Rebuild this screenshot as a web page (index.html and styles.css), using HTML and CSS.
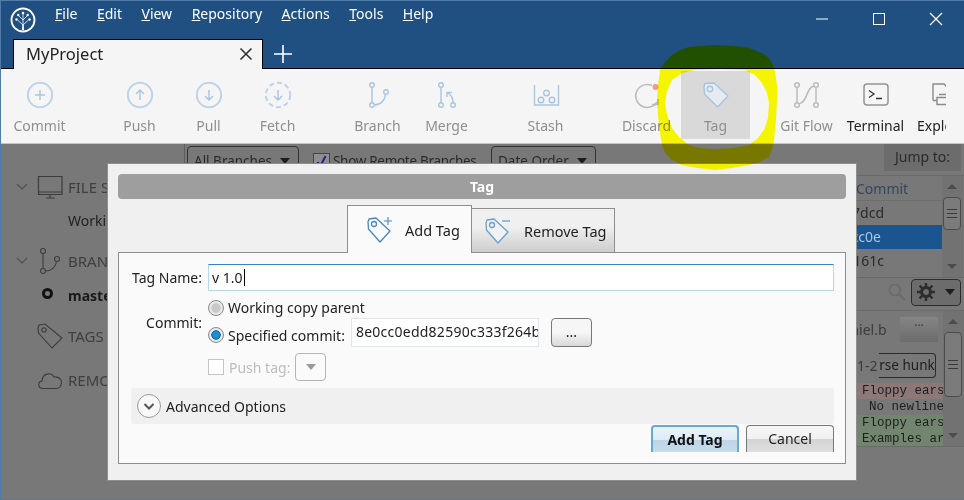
FILE: index.html

```html
<!DOCTYPE html>
<html lang="en">
<head>
  <meta charset="UTF-8">
  <title>MyProject - Tag</title>
  <link rel="stylesheet" href="styles.css">
</head>
<body>
  <div class="window">

    <!-- title bar, menu and tabs -->
    <div class="titlebar">
      <div class="menu-row">
        <svg class="logo" width="26" height="26" viewBox="0 0 26 26">
          <circle cx="13" cy="13" r="11.5" fill="none" stroke="#fff" stroke-width="1.8"/>
          <path d="M13 22.500V6.500M13 18L7.500 13M13 18L18.500 13M13 13L8.500 8.500M13 13L17.500 8.500" fill="none" stroke="#dfe8f0" stroke-width="0.900"/>
          <path d="M12 23L12.500 17H13.500L14 23Z" fill="#fff"/>
          <circle cx="13" cy="6" r="1.300" fill="#fff"/>
          <circle cx="8.300" cy="8" r="1.200" fill="#fff"/>
          <circle cx="17.700" cy="8" r="1.200" fill="#fff"/>
          <circle cx="6.500" cy="12.500" r="1.200" fill="#fff"/>
          <circle cx="19.500" cy="12.500" r="1.200" fill="#fff"/>
        </svg>
        <div class="menu">
          <span><u>F</u>ile</span>
          <span><u>E</u>dit</span>
          <span><u>V</u>iew</span>
          <span><u>R</u>epository</span>
          <span><u>A</u>ctions</span>
          <span><u>T</u>ools</span>
          <span><u>H</u>elp</span>
        </div>
        <div class="win-controls">
          <div class="win-btn"><svg width="14" height="14" viewBox="0 0 14 14"><path d="M1 7H13" stroke="#fff" stroke-width="1"/></svg></div>
          <div class="win-btn"><svg width="14" height="14" viewBox="0 0 14 14"><rect x="1.5" y="1.5" width="11" height="11" fill="none" stroke="#fff" stroke-width="1"/></svg></div>
          <div class="win-btn"><svg width="14" height="14" viewBox="0 0 14 14"><path d="M1 1L13 13M13 1L1 13" stroke="#fff" stroke-width="1.2"/></svg></div>
        </div>
      </div>
      <div class="tab-row">
        <div class="repo-tab">
          <span>MyProject</span>
          <svg width="14" height="14" viewBox="0 0 14 14"><path d="M1.5 1.5L12.5 12.5M12.5 1.5L1.5 12.5" stroke="#333" stroke-width="1.6"/></svg>
        </div>
        <svg class="new-tab" width="20" height="20" viewBox="0 0 20 20"><path d="M10 1V19M1 10H19" stroke="#fff" stroke-width="1.6"/></svg>
      </div>
    </div>

    <!-- toolbar -->
    <div class="toolbar">
      <div class="tool">
        <svg width="30" height="30" viewBox="0 0 30 30"><circle cx="15" cy="15" r="12.2" class="ic-ring"/><path d="M15 10V20M10 15H20" class="ic-line"/></svg>
        <span>Commit</span>
      </div>
      <div class="tool gap-31">
        <svg width="30" height="30" viewBox="0 0 30 30"><circle cx="15" cy="15" r="12.2" class="ic-ring"/><path d="M15 20V10M11 14L15 10L19 14" class="ic-line"/></svg>
        <span>Push</span>
      </div>
      <div class="tool">
        <svg width="30" height="30" viewBox="0 0 30 30"><circle cx="15" cy="15" r="12.2" class="ic-ring"/><path d="M15 10V20M11 16L15 20L19 16" class="ic-line"/></svg>
        <span>Pull</span>
      </div>
      <div class="tool">
        <svg width="30" height="30" viewBox="0 0 30 30"><circle cx="15" cy="15" r="12.2" class="ic-ring" stroke-dasharray="5 3"/><path d="M15 10V20M11 16L15 20L19 16" class="ic-line"/></svg>
        <span>Fetch</span>
      </div>
      <div class="tool gap-31">
        <svg width="30" height="30" viewBox="0 0 30 30"><circle cx="9" cy="5" r="2.3" class="ic-line"/><circle cx="9" cy="25" r="2.3" class="ic-line"/><circle cx="23" cy="12" r="2.3" class="ic-line"/><path d="M9 7.500V22.500M11.500 25C18 25 22 20 22.500 14.500" class="ic-line"/></svg>
        <span>Branch</span>
      </div>
      <div class="tool">
        <svg width="30" height="30" viewBox="0 0 30 30"><circle cx="9" cy="5" r="2.3" class="ic-line"/><circle cx="9" cy="25" r="2.3" class="ic-line"/><circle cx="21" cy="25" r="2.3" class="ic-line"/><path d="M9 7.500V22.500M21 22.500C21 18 19 15 16 13M15 17V12.500H20" class="ic-line"/></svg>
        <span>Merge</span>
      </div>
      <div class="tool gap-30">
        <svg width="30" height="30" viewBox="0 0 30 30"><path d="M3.500 5V25H27.500V5" class="ic-line"/><circle cx="10" cy="20" r="2.800" class="ic-line"/><circle cx="15.500" cy="13" r="2.800" class="ic-line"/><circle cx="21" cy="20" r="2.800" class="ic-line"/></svg>
        <span>Stash</span>
      </div>
      <div class="tool gap-32">
        <svg width="30" height="30" viewBox="0 0 30 30"><path d="M20 5.500A11.500 11.500 0 1 0 25 22" class="ic-grey"/><path d="M20 24.500H26V19" class="ic-grey"/><circle cx="23.500" cy="7" r="3" fill="#ee9a9a"/></svg>
        <span>Discard</span>
      </div>
      <div class="tool tool-hover">
        <svg width="30" height="30" viewBox="0 0 30 30"><path d="M3 6.500L4 3.500L13 3L27 16L16.500 27L3.500 14Z" fill="#e6ebf2" stroke="#a9c3df" stroke-width="1.400" stroke-linejoin="round"/><circle cx="9" cy="9" r="2.700" fill="none" stroke="#a9c3df" stroke-width="1.400"/></svg>
        <span>Tag</span>
      </div>
      <div class="tool gap-22">
        <svg width="30" height="30" viewBox="0 0 30 30"><circle cx="5" cy="5" r="2.300" class="ic-grey"/><circle cx="5" cy="25" r="2.300" class="ic-grey"/><circle cx="24" cy="5" r="2.300" class="ic-grey"/><circle cx="24" cy="25" r="2.300" class="ic-grey"/><path d="M5 7.500V22.500M24 7.500V22.500M22 6C14 7 16 22 7 24" class="ic-grey"/></svg>
        <span>Git Flow</span>
      </div>
      <div class="tool tool-on">
        <svg width="30" height="30" viewBox="0 0 30 30"><rect x="3" y="4" width="24" height="21" rx="3" fill="none" stroke="#959595" stroke-width="1.500"/><path d="M8 10.500L13 14L8 17.500M15 18.500H21" fill="none" stroke="#333" stroke-width="1.300"/></svg>
        <span>Terminal</span>
      </div>
      <div class="tool tool-on tool-cut">
        <div class="tool-inner">
          <svg width="30" height="30" viewBox="0 0 30 30"><path d="M3 20.500V4H14L19 9M3 20.500H6.500M7 17.500H24V24.500H7ZM9 14.500H22" fill="none" stroke="#8a8a8a" stroke-width="1.400"/></svg>
          <span>Explorer</span>
        </div>
      </div>
    </div>

    <!-- dimmed repository view behind the dialog -->
    <div class="workspace">
      <div class="filterbar">
        <div class="filters">
          <div class="dim-select select-branches">All Branches <i class="caret"></i></div>
          <label class="dim-check">
            <b class="check-box"><svg width="15" height="15" viewBox="0 0 15 15"><path d="M3.500 8L6.500 12L11.500 2" fill="none" stroke="#24247c" stroke-width="2"/></svg></b>
            Show Remote Branches
          </label>
          <div class="dim-select select-order">Date Order <i class="caret"></i></div>
        </div>
        <div class="jump">Jump to:</div>
      </div>
      <div class="panes">
        <div class="sidebar">
          <div class="side-head">
            <svg class="chev" width="12" height="8" viewBox="0 0 12 8"><path d="M1 1L6 6L11 1" fill="none" stroke="#555" stroke-width="1.500"/></svg>
            <svg width="26" height="24" viewBox="0 0 26 24"><path d="M1.500 1.500H25V19.500H1.500ZM1.500 17H25M9 23H18M13 20V23" fill="none" stroke="#3c3c3c" stroke-width="1.200"/></svg>
            <span>FILE STATUS</span>
          </div>
          <div class="side-item">Working Copy</div>
          <div class="side-head">
            <svg class="chev" width="12" height="8" viewBox="0 0 12 8"><path d="M1 1L6 6L11 1" fill="none" stroke="#555" stroke-width="1.500"/></svg>
            <svg width="26" height="26" viewBox="0 0 26 26"><circle cx="6" cy="3" r="2.500" fill="none" stroke="#3c3c3c" stroke-width="1.100"/><circle cx="6" cy="23" r="2.500" fill="none" stroke="#3c3c3c" stroke-width="1.100"/><circle cx="20" cy="11" r="2.500" fill="none" stroke="#3c3c3c" stroke-width="1.100"/><path d="M6 5.500V20.500M8.500 23C14 23 19 19 19.500 13.500" fill="none" stroke="#3c3c3c" stroke-width="1.100"/></svg>
            <span>BRANCHES</span>
          </div>
          <div class="side-current"><i class="head-dot"></i>master</div>
          <div class="side-head side-nochev side-tags">
            <svg width="26" height="26" viewBox="0 0 26 26"><path d="M1 5L2 2L8 1L25 15L15 25L1.500 10Z" fill="none" stroke="#3c3c3c" stroke-width="1.100"/><circle cx="7" cy="7" r="2.200" fill="none" stroke="#3c3c3c" stroke-width="1.100"/></svg>
            <span>TAGS</span>
          </div>
          <div class="side-head side-nochev side-remotes">
            <svg width="26" height="20" viewBox="0 0 26 20"><path d="M6 18.500C1 18.500 0 12 5 11C5 4 14 1 17 7C22 6 25 10 24.500 13C24 17 22 18.500 19 18.500Z" fill="none" stroke="#3c3c3c" stroke-width="1.100"/></svg>
            <span>REMOTES</span>
          </div>
        </div>
        <div class="center"></div>
        <div class="right-pane">
          <div class="history">
            <div class="history-list">
              <div class="history-head">Commit</div>
              <div class="hash">a27dcd</div>
              <div class="hash hash-sel">8e0cc0e</div>
              <div class="hash">f3161c</div>
            </div>
            <div class="scroll">
              <i class="arrow-up"></i>
              <b class="thumb thumb-short"></b>
              <i class="arrow-down"></i>
            </div>
          </div>
          <div class="search-row">
            <svg width="20" height="20" viewBox="0 0 20 20"><circle cx="8" cy="8" r="5.500" fill="none" stroke="#6a6a6a" stroke-width="1.600"/><path d="M12 12L18 18" stroke="#6a6a6a" stroke-width="2.200"/></svg>
            <div class="gear-btn">
              <svg width="18" height="18" viewBox="0 0 18 18"><circle cx="9" cy="9" r="4.500" fill="none" stroke="#2c2c2c" stroke-width="3"/><path d="M9 0V4M9 14V18M0 9H4M14 9H18M2.600 2.600L5.500 5.500M12.500 12.500L15.400 15.400M15.400 2.600L12.500 5.500M5.500 12.500L2.600 15.400" stroke="#2c2c2c" stroke-width="2.400"/></svg>
              <i class="caret"></i>
            </div>
          </div>
          <div class="diff">
            <div class="diff-body">
              <div class="diff-file"><span>daniel.b</span><b class="more">...</b></div>
              <div class="diff-hunk"><span>1-2</span><b class="hunk-btn">rse hunk</b></div>
              <div class="line line-del">Floppy ears</div>
              <div class="line line-note">No newline</div>
              <div class="line line-add">Floppy ears</div>
              <div class="line line-add">Examples ar</div>
            </div>
            <div class="scroll">
              <i class="arrow-up"></i>
              <b class="thumb"></b>
              <i class="arrow-down"></i>
            </div>
          </div>
        </div>
      </div>
    </div>

    <!-- Tag dialog -->
    <div class="dialog">
      <div class="dialog-title">Tag</div>
      <div class="dialog-tabs">
        <div class="dtab dtab-on">
          <svg width="30" height="28" viewBox="0 0 30 28"><path d="M2 6L3 3L10 2L24 15L14 26L2.500 13Z" fill="none" stroke="#4a86c0" stroke-width="1.300" stroke-linejoin="round"/><circle cx="8" cy="8" r="2.500" fill="none" stroke="#4a86c0" stroke-width="1.300"/><path d="M22 1V9M18 5H26" stroke="#4a86c0" stroke-width="1.100"/></svg>
          <span>Add Tag</span>
        </div>
        <div class="dtab dtab-off">
          <svg width="30" height="28" viewBox="0 0 30 28"><path d="M2 6L3 3L10 2L24 15L14 26L2.500 13Z" fill="#f2f2f2" stroke="#6a9fd0" stroke-width="1.300" stroke-linejoin="round"/><circle cx="8" cy="8" r="2.500" fill="none" stroke="#6a9fd0" stroke-width="1.300"/><path d="M18 4H26" stroke="#6a9fd0" stroke-width="1.300"/></svg>
          <span>Remove Tag</span>
        </div>
      </div>
      <div class="dialog-panel">
        <div class="form-row row-name">
          <label class="form-label">Tag Name:</label>
          <div class="field field-name">v 1.0<i class="cursor"></i></div>
        </div>
        <div class="form-row row-commit">
          <label class="form-label">Commit:</label>
          <div class="commit-opts">
            <label class="radio-line"><i class="radio"></i>Working copy parent</label>
            <div class="radio-line radio-line-b">
              <label class="radio-label"><i class="radio radio-on"></i>Specified commit:</label>
              <div class="field field-hash">8e0cc0edd82590c333f264b</div>
              <div class="dots-btn">...</div>
            </div>
          </div>
        </div>
        <div class="form-row row-push">
          <span class="form-label"></span>
          <i class="box-off"></i>
          <span class="push-text">Push tag:</span>
          <div class="select-off"><i class="caret caret-off"></i></div>
        </div>
        <div class="advanced">
          <svg width="26" height="26" viewBox="0 0 26 26"><circle cx="13" cy="13" r="11.500" fill="#f8f8f8" stroke="#9a9a9a" stroke-width="1"/><path d="M8.500 11L13 15.500L17.500 11" fill="none" stroke="#555" stroke-width="2"/></svg>
          <span>Advanced Options</span>
        </div>
        <div class="dialog-actions">
          <div class="btn btn-main">Add Tag</div>
          <div class="btn">Cancel</div>
        </div>
      </div>
    </div>

    <!-- marker scribble round the Tag button -->
    <svg class="scribble" width="964" height="500" viewBox="0 0 964 500">
      <path fill="#ffff00" fill-rule="evenodd" d="M689 47L700 46L715 45L735 46L749 48L762 53L769 58L773 65L775 72L777 85L777 100L776 120L774 140L772 150L769 157L760 162L749 165L732 168L715 170L698 168L682 165L672 160L665 153L662 145L660 133L658 115L657 100L658 85L660 70L665 62L672 55L680 50Z M695 70L720 69L745 70L755 75L762 83L767 93L769 103L768 118L764 130L757 139L749 145L733 148L715 149L700 148L689 145L679 137L672 128L667 115L665 103L667 91L672 80L682 73Z"/>
    </svg>

  </div>
</body>
</html>
```

FILE: styles.css

```css
* {
  box-sizing: border-box;
}

html, body {
  margin: 0;
  height: 100%;
}

body {
  font-family: "Noto Sans", "Liberation Sans", sans-serif;
  font-size: 14px;
  color: #222;
}

.window {
  position: relative;
  width: 964px;
  height: 500px;
  display: flex;
  flex-direction: column;
  overflow: hidden;
  background: #787878;
  border: 1px solid #4f7ca8;
  border-right: 0;
}

/* title bar */
.titlebar {
  flex: none;
  height: 68px;
  background: #205081;
  border-bottom: 1px solid #000;
}

.menu-row {
  display: flex;
  align-items: flex-start;
  height: 38px;
}

.logo {
  margin: 6px 0 0 9px;
}

.menu {
  display: flex;
  gap: 19.5px;
  margin: 2px 0 0 19px;
  color: #fff;
  line-height: 22px;
}

.win-controls {
  display: flex;
  margin-left: auto;
}

.win-btn {
  width: 57px;
  height: 36px;
  display: flex;
  align-items: center;
  justify-content: center;
}

.tab-row {
  display: flex;
  align-items: center;
  height: 30px;
  padding-left: 12px;
}

.repo-tab {
  display: flex;
  align-items: center;
  justify-content: space-between;
  width: 250px;
  height: 30px;
  padding: 0 9px 2px 12px;
  background: #f5f5f5;
  border: 1px solid #000;
  border-bottom: 0;
  font-size: 16.5px;
  color: #222;
}

.new-tab {
  margin-left: 10px;
}

/* toolbar */
.toolbar {
  flex: none;
  display: flex;
  height: 75px;
  padding-left: 4px;
  background: #f5f5f5;
  border-bottom: 1px solid #c6c6c6;
}

.tool {
  flex: none;
  width: 69px;
  height: 68px;
  margin-top: 2px;
  padding-top: 9px;
  display: flex;
  flex-direction: column;
  align-items: center;
  color: #8f8f8f;
  white-space: nowrap;
}

.tool span {
  margin-top: 6px;
  line-height: 20px;
}

.gap-22 { margin-left: 22px; }
.gap-30 { margin-left: 30px; }
.gap-31 { margin-left: 31px; }
.gap-32 { margin-left: 32px; }

.tool-hover {
  background: #d9d9d9;
}

.tool-on {
  color: #222;
}

.tool-cut {
  width: 36px;
  overflow: hidden;
  display: block;
  padding-top: 0;
}

.tool-inner {
  width: 69px;
  padding-top: 9px;
  display: flex;
  flex-direction: column;
  align-items: center;
}

.ic-ring {
  fill: none;
  stroke: #bdd3e9;
  stroke-width: 2;
}

.ic-line {
  fill: none;
  stroke: #aac5e0;
  stroke-width: 1.4;
}

.ic-grey {
  fill: none;
  stroke: #bcbcbc;
  stroke-width: 1.5;
}

/* dimmed workspace */
.workspace {
  flex: 1;
  display: flex;
  flex-direction: column;
  min-height: 0;
  color: #2a2a2a;
}

.filterbar {
  flex: none;
  display: flex;
  align-items: flex-start;
  height: 31px;
  padding-right: 3px;
}

.filters {
  display: flex;
  align-items: flex-start;
  gap: 14px;
  height: 20px;
  margin-left: 183px;
  padding-left: 2px;
  border-left: 1px solid #5e5e5e;
}

.dim-select {
  display: flex;
  align-items: center;
  justify-content: space-between;
  flex: none;
  height: 28px;
  margin-top: 2px;
  padding: 1px 8px 0 6px;
  border: 1px solid #333;
  border-radius: 4px;
  font-size: 13.5px;
  white-space: nowrap;
}

.select-branches {
  width: 112px;
}

.select-order {
  width: 105px;
}

.dim-check {
  display: flex;
  align-items: center;
  flex: none;
  width: 164px;
  height: 28px;
  margin-top: 3px;
  font-size: 13.5px;
  letter-spacing: -0.3px;
  white-space: nowrap;
}

.check-box {
  flex: none;
  width: 17px;
  height: 17px;
  margin-right: 3px;
  background: #8f8f8f;
  border: 1px solid #444;
}

.jump {
  flex: none;
  width: 77px;
  height: 27px;
  margin-left: auto;
  background: #6c6c6c;
  text-align: center;
  line-height: 26px;
}

.caret {
  display: inline-block;
  border-left: 5px solid transparent;
  border-right: 5px solid transparent;
  border-top: 6px solid #1c1c1c;
}

.panes {
  flex: 1;
  display: flex;
  min-height: 0;
}

/* sidebar */
.sidebar {
  width: 183px;
  flex: none;
  padding-left: 15px;
}

.side-head {
  display: flex;
  align-items: center;
  gap: 9px;
  height: 24px;
  font-size: 15px;
  color: #3f3f3f;
  white-space: nowrap;
}

.side-head svg {
  flex: none;
}

.side-head span {
  margin-left: -4px;
}

.side-nochev {
  padding-left: 21px;
}

.side-tags {
  margin-top: 11px;
}

.side-remotes {
  margin-top: 20px;
}

.side-item {
  height: 50px;
  padding: 12px 0 0 52px;
  line-height: 20px;
  color: #222;
  white-space: nowrap;
}

.side-current {
  position: relative;
  height: 40px;
  padding: 13px 0 0 52px;
  line-height: 20px;
  font-weight: 700;
  color: #1a1a1a;
  white-space: nowrap;
}

.head-dot {
  position: absolute;
  left: 26px;
  top: 15px;
  width: 11px;
  height: 11px;
  border: 3px solid #111;
  border-radius: 50%;
}

.center {
  flex: 1;
}

/* history and diff on the right */
.right-pane {
  flex: none;
  width: 144px;
  display: flex;
  flex-direction: column;
}

.history {
  display: flex;
  flex: none;
  height: 103px;
  border-top: 1px solid #6a6a6a;
  border-bottom: 1px solid #6a6a6a;
}

.history-list {
  flex: none;
  width: 122px;
}

.history-head {
  height: 25px;
  padding-left: 36px;
  line-height: 26px;
  color: #33475c;
  border-bottom: 1px solid #6e6e6e;
}

.hash {
  height: 24px;
  padding-right: 58px;
  text-align: right;
  line-height: 24px;
}

.hash-sel {
  padding-right: 61px;
  background: #1a5590;
  color: #a9c6e2;
}

.scroll {
  width: 21px;
  flex: none;
  display: flex;
  flex-direction: column;
  align-items: flex-start;
  padding: 8px 0 8px 1px;
  gap: 8px;
  background: #727272;
}

.arrow-up, .arrow-down {
  flex: none;
  margin-left: 4px;
  border-left: 5px solid transparent;
  border-right: 5px solid transparent;
}

.arrow-up {
  border-bottom: 5px solid #4c4c4c;
}

.arrow-down {
  margin-top: auto;
  border-top: 5px solid #4c4c4c;
}

.thumb {
  width: 18px;
  height: 65px;
  border: 1px solid #4c4c4c;
  border-radius: 4px;
  background-color: #7b7b7b;
  background-image: linear-gradient(#3a3a3a, #3a3a3a), linear-gradient(#3a3a3a, #3a3a3a), linear-gradient(#3a3a3a, #3a3a3a);
  background-repeat: no-repeat;
  background-size: 10px 1px;
  background-position: center calc(50% - 4px), center center, center calc(50% + 4px);
}

.thumb-short {
  height: 33px;
}

.search-row {
  flex: none;
  display: flex;
  align-items: center;
  justify-content: flex-end;
  gap: 4px;
  height: 33px;
  padding: 0 3px 4px 0;
  border-bottom: 1px solid #6a6a6a;
}

.gear-btn {
  display: flex;
  align-items: center;
  justify-content: center;
  gap: 10px;
  width: 50px;
  height: 27px;
  border: 1px solid #2c2c2c;
  border-radius: 4px;
  background: #6c6c6c;
}

.diff {
  display: flex;
  flex: none;
  height: 136px;
  border-bottom: 1px solid #6a6a6a;
}

.diff-body {
  flex: none;
  width: 123px;
  overflow: hidden;
}

.diff-file {
  display: flex;
  align-items: center;
  justify-content: space-between;
  height: 36px;
  padding: 0 5px 0 14px;
  color: #3c3c3c;
}

.more {
  flex: none;
  width: 38px;
  height: 25px;
  text-align: center;
  line-height: 10px;
  font-size: 12px;
  color: #3c3c3c;
  font-weight: 400;
  background: linear-gradient(#858585, #6c6c6c);
}

.diff-hunk {
  display: flex;
  align-items: center;
  justify-content: space-between;
  height: 36px;
  padding: 0 7px 0 37px;
  color: #3c3c3c;
}

.hunk-btn {
  flex: none;
  width: 57px;
  height: 25px;
  border: 1px solid #2c2c2c;
  border-left: 0;
  border-radius: 0 4px 4px 0;
  text-align: center;
  line-height: 23px;
  font-size: 13.5px;
  font-weight: 400;
  color: #1e1e1e;
  white-space: nowrap;
}

.line {
  height: 16px;
  padding-left: 42px;
  font-family: "Liberation Mono", monospace;
  font-size: 12.5px;
  line-height: 16px;
  color: #1e1e1e;
  white-space: pre;
}

.line-del {
  background: #8c7877;
}

.line-note {
  padding-left: 49px;
}

.line-add {
  background: #72866f;
}

/* dialog */
.dialog {
  position: absolute;
  left: 106px;
  top: 162px;
  width: 750px;
  height: 318px;
  padding: 10px;
  background: #f0f0f0;
  border: 1px solid #8e8e8e;
}

.dialog-title {
  height: 25px;
  border-radius: 4px;
  background: #9e9e9e;
  color: #fff;
  font-weight: 700;
  text-align: center;
  line-height: 25px;
  font-size: 14px;
}

.dialog-tabs {
  display: flex;
  justify-content: center;
  align-items: flex-end;
  height: 54px;
  margin-bottom: -1px;
  padding-right: 2px;
}

.dtab {
  display: flex;
  align-items: center;
  flex: none;
  height: 45px;
  font-size: 14.5px;
  white-space: nowrap;
}

.dtab-off {
  gap: 10px;
  width: 143px;
  padding-left: 12px;
  border: 1px solid #8e8e8e;
  border-left: 0;
  background: linear-gradient(#f0f0f0, #f0f0f0 40%, #cdcdcd);
}

.dtab-on {
  position: relative;
  gap: 9px;
  width: 125px;
  height: 48px;
  padding-left: 18px;
  border: 1px solid #8e8e8e;
  border-bottom: 0;
  background: #fafafa;
}

.dialog-panel {
  height: 212px;
  padding: 11px 11px 0 12px;
  background: #fafafa;
  border: 1px solid #8e8e8e;
}

.form-row {
  display: flex;
}

.form-label {
  flex: none;
  width: 71px;
  margin-right: 6px;
  text-align: right;
  white-space: nowrap;
}

.row-name {
  align-items: center;
  height: 27px;
}

.field {
  height: 27px;
  padding: 0 4px;
  background: #fff;
  line-height: 27px;
  white-space: nowrap;
  overflow: hidden;
}

.field-name {
  flex: 1;
  padding: 0 3px;
  border: 1px solid #b5d8f0;
  border-top: 1px solid #3a80c2;
  line-height: 25px;
}

.cursor {
  display: inline-block;
  width: 1px;
  height: 17px;
  margin-left: 1px;
  background: #000;
  vertical-align: -3px;
}

.row-commit {
  align-items: center;
  margin-top: 6px;
}

.commit-opts {
  display: flex;
  flex-direction: column;
}

.radio-line {
  display: flex;
  align-items: center;
  height: 21px;
  white-space: nowrap;
}

.radio-line-b {
  height: 29px;
}

.radio-label {
  display: flex;
  align-items: center;
  padding-top: 5px;
}

.radio {
  width: 16px;
  height: 16px;
  margin-right: 4px;
  border: 1px solid #8a8a8a;
  border-radius: 50%;
  background: radial-gradient(#c9c9c9 45%, #e8e8e8 50%);
}

.radio-on {
  background: radial-gradient(#1c8fd6 30%, #0d6aa8 45%, #e8e8e8 50%);
}

.field-hash {
  width: 188px;
  margin-left: 6px;
  height: 29px;
  border: 1px solid #dfe6ee;
  letter-spacing: 0.25px;
  line-height: 25px;
}

.dots-btn {
  width: 41px;
  height: 29px;
  margin-left: 12px;
  border: 1px solid #777;
  border-radius: 4px;
  background: linear-gradient(#f6f6f6, #f6f6f6 50%, #d8d8d8);
  text-align: center;
  line-height: 25px;
}

.row-push {
  align-items: center;
  height: 28px;
  margin-top: 6px;
}

.box-off {
  width: 16px;
  height: 16px;
  border: 1px solid #c4c4c4;
  background: #fff;
}

.push-text {
  margin: 0 5px 0 5px;
  color: #bdbdbd;
  white-space: nowrap;
}

.select-off {
  display: flex;
  align-items: center;
  justify-content: center;
  width: 31px;
  height: 28px;
  border: 1px solid #b4b4b4;
  border-radius: 4px;
}

.caret-off {
  border-top-color: #9a9a9a;
}

.advanced {
  display: flex;
  align-items: center;
  gap: 4px;
  height: 36px;
  margin-top: 7px;
  padding-left: 5px;
  border-radius: 3px;
  background: #f0f0f0;
}

.dialog-actions {
  display: flex;
  justify-content: flex-end;
  gap: 7px;
  margin-top: 1px;
}

.btn {
  width: 88px;
  height: 27px;
  border: 1px solid #777;
  border-bottom: 0;
  border-radius: 4px 4px 0 0;
  background: linear-gradient(#f8f8f8, #f0f0f0 50%, #d4d4d4 52%, #dedede);
  text-align: center;
  line-height: 26px;
}

.btn-main {
  border: 2px solid #6aa6d6;
  border-bottom: 0;
  background: linear-gradient(#eaf3fa, #dfeaf3 50%, #bcd5e6 52%, #c8dcea);
  line-height: 25px;
  font-weight: 700;
  color: #111;
}

/* marker */
.scribble {
  position: absolute;
  left: -1px;
  top: -1px;
  mix-blend-mode: multiply;
  pointer-events: none;
}
```
